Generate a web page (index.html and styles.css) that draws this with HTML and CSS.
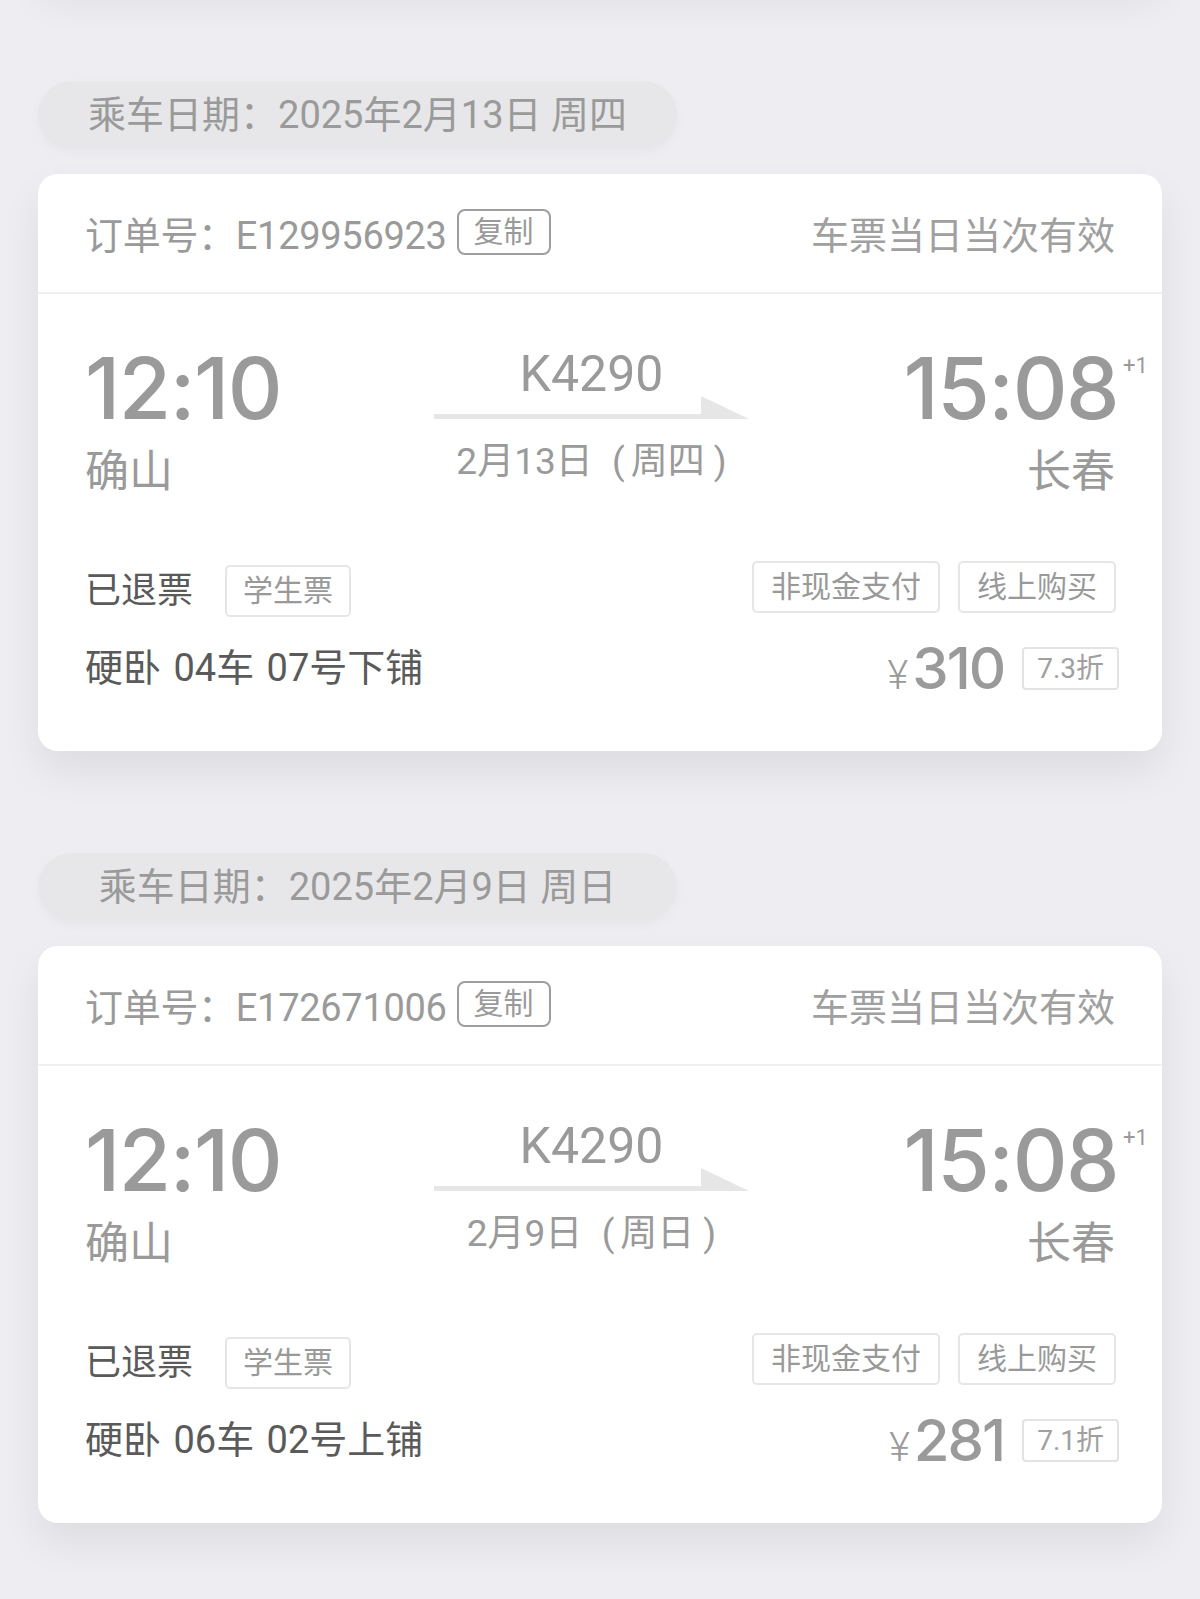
FILE: index.html
```html
<!DOCTYPE html>
<html lang="zh-CN">
<head>
<meta charset="utf-8">
<title>订单列表</title>
<link rel="stylesheet" href="styles.css">
</head>
<body>
<main class="list">
  <div class="card card-prev"></div>

  <section class="group">
    <div class="date-pill">乘车日期：2025年2月13日 周四</div>
    <article class="card">
      <header class="card-head">
        <div class="order">订单号：E129956923<span class="copy">复制</span></div>
        <div class="valid">车票当日当次有效</div>
      </header>
      <div class="route">
        <div class="stop">
          <div class="time">12:10</div>
          <div class="station">确山</div>
        </div>
        <div class="train">
          <div class="train-no">K4290</div>
          <svg class="arrow" width="315" height="24" viewBox="0 0 315 24"><rect x="0" y="18" width="300" height="5" fill="#e6e6e6"/><polygon points="267,0 315,23 267,23" fill="#e6e6e6"/></svg>
          <div class="train-date">2月13日<span class="paren paren-open">(</span>周四<span class="paren paren-close">)</span></div>
        </div>
        <div class="stop stop-end">
          <div class="time"><span class="time-val">15:08<span class="plus">+1</span></span></div>
          <div class="station">长春</div>
        </div>
      </div>
      <div class="info-row">
        <div class="status">已退票<span class="tag">学生票</span></div>
        <div class="tags"><span class="tag tag-wide">非现金支付</span><span class="tag tag-wide">线上购买</span></div>
      </div>
      <div class="seat-row">
        <div class="seat">硬卧 04车 07号下铺</div>
        <div class="price"><span class="yen">¥</span><span class="amount">310</span><span class="discount">7.3折</span></div>
      </div>
    </article>
  </section>

  <section class="group">
    <div class="date-pill">乘车日期：2025年2月9日 周日</div>
    <article class="card">
      <header class="card-head">
        <div class="order">订单号：E172671006<span class="copy">复制</span></div>
        <div class="valid">车票当日当次有效</div>
      </header>
      <div class="route">
        <div class="stop">
          <div class="time">12:10</div>
          <div class="station">确山</div>
        </div>
        <div class="train">
          <div class="train-no">K4290</div>
          <svg class="arrow" width="315" height="24" viewBox="0 0 315 24"><rect x="0" y="18" width="300" height="5" fill="#e6e6e6"/><polygon points="267,0 315,23 267,23" fill="#e6e6e6"/></svg>
          <div class="train-date">2月9日<span class="paren paren-open">(</span>周日<span class="paren paren-close">)</span></div>
        </div>
        <div class="stop stop-end">
          <div class="time"><span class="time-val">15:08<span class="plus">+1</span></span></div>
          <div class="station">长春</div>
        </div>
      </div>
      <div class="info-row">
        <div class="status">已退票<span class="tag">学生票</span></div>
        <div class="tags"><span class="tag tag-wide">非现金支付</span><span class="tag tag-wide">线上购买</span></div>
      </div>
      <div class="seat-row">
        <div class="seat">硬卧 06车 02号上铺</div>
        <div class="price"><span class="yen">¥</span><span class="amount">281</span><span class="discount">7.1折</span></div>
      </div>
    </article>
  </section>
</main>
</body>
</html>
```
FILE: styles.css
```css
* { box-sizing: border-box; }
html, body { margin: 0; padding: 0; }
body {
  background: #eeeef2;
  font-family: Roboto, "Noto Sans CJK SC", sans-serif;
  color: #999;
}
.list {
  display: flex;
  flex-direction: column;
  gap: 102px;
  padding: 0 38px 120px;
}
.card {
  background: #fff;
  border-radius: 20px;
  box-shadow: 0 20px 40px rgba(0, 0, 0, 0.07);
}
.card-prev {
  height: 100px;
  margin-top: -121px;
}
.group {
  display: flex;
  flex-direction: column;
  gap: 25px;
}
.date-pill {
  width: 639px;
  height: 68px;
  border-radius: 34px;
  background: #e7e7e9;
  box-shadow: 0 4px 12px rgba(0, 0, 0, 0.03);
  font-size: 38px;
  line-height: 68px;
  text-align: center;
  color: #9a9a9a;
}
.card-head {
  height: 120px;
  padding: 0 47px 2px;
  border-bottom: 2px solid #f0f0f0;
  display: flex;
  align-items: center;
  justify-content: space-between;
  font-size: 38px;
  color: #9a9a9a;
}
.order { display: flex; align-items: center; letter-spacing: -0.3px; }
.copy {
  margin-left: 10px;
  height: 46px;
  padding: 0 15px;
  border: 2px solid #9e9e9e;
  border-radius: 8px;
  font-size: 30px;
  line-height: 42px;
  letter-spacing: 0;
}
.valid { color: #a0a0a0; }
.route {
  display: grid;
  grid-template-columns: 349px 315px 1fr;
  padding: 52px 47px 0;
}
.time {
  font-family: Inter, Roboto, sans-serif;
  font-size: 85px;
  line-height: 86px;
  font-weight: 500;
  letter-spacing: -1.5px;
  color: #9a9a9a;
}
.station {
  margin-top: 18px;
  font-size: 44px;
  line-height: 44px;
  color: #9a9a9a;
}
.train {
  display: flex;
  flex-direction: column;
  align-items: center;
}
.train-no {
  margin-top: 3px;
  font-size: 50px;
  line-height: 50px;
  color: #9a9a9a;
}
.arrow { display: block; margin-top: -3px; }
.train-date {
  margin-top: 24px;
  font-size: 37px;
  line-height: 36px;
  color: #9a9a9a;
}
.paren { display: inline-block; }
.paren-open { width: 38px; text-align: right; padding-right: 6px; }
.paren-close { padding-left: 9px; }
.stop-end { text-align: right; }
.time-val {
  position: relative;
  display: inline-block;
  margin-right: -3px;
}
.plus {
  position: absolute;
  left: calc(100% + 5px);
  top: 9px;
  font-family: Roboto, sans-serif;
  font-size: 22px;
  line-height: 22px;
  font-weight: 400;
  letter-spacing: 0;
}
.info-row {
  margin-top: 71px;
  padding: 0 46px 0 47px;
  height: 52px;
  display: flex;
  align-items: center;
  justify-content: space-between;
}
.status {
  display: flex;
  align-items: center;
  font-size: 36px;
  line-height: 36px;
  color: #5a5a5a;
}
.tag {
  display: inline-block;
  height: 52px;
  padding: 0 16px;
  border: 2px solid #e6e6e6;
  border-radius: 5px;
  font-size: 30px;
  line-height: 48px;
  color: #999;
}
.status .tag { margin-left: 32px; }
.tags { display: flex; gap: 18px; margin-top: -8px; }
.tag-wide { padding: 0 17px; }
.seat-row {
  margin-top: 30px;
  padding: 0 43px 61px 47px;
  display: flex;
  align-items: center;
  justify-content: space-between;
}
.seat {
  font-size: 38px;
  line-height: 43px;
  word-spacing: 3px;
  color: #5a5a5a;
}
.price {
  display: flex;
  align-items: baseline;
  height: 43px;
}
.yen {
  font-size: 40px;
  line-height: 43px;
  font-weight: 300;
  color: #9a9a9a;
}
.amount {
  margin-left: 4px;
  font-family: Inter, Roboto, sans-serif;
  font-size: 58px;
  line-height: 43px;
  font-weight: 500;
  letter-spacing: -2px;
  color: #9a9a9a;
}
.discount {
  align-self: center;
  margin-left: 18px;
  height: 43px;
  padding: 0 13px;
  border: 2px solid #e3e3e3;
  border-radius: 4px;
  font-size: 28px;
  line-height: 39px;
  color: #a0a0a0;
}
```
